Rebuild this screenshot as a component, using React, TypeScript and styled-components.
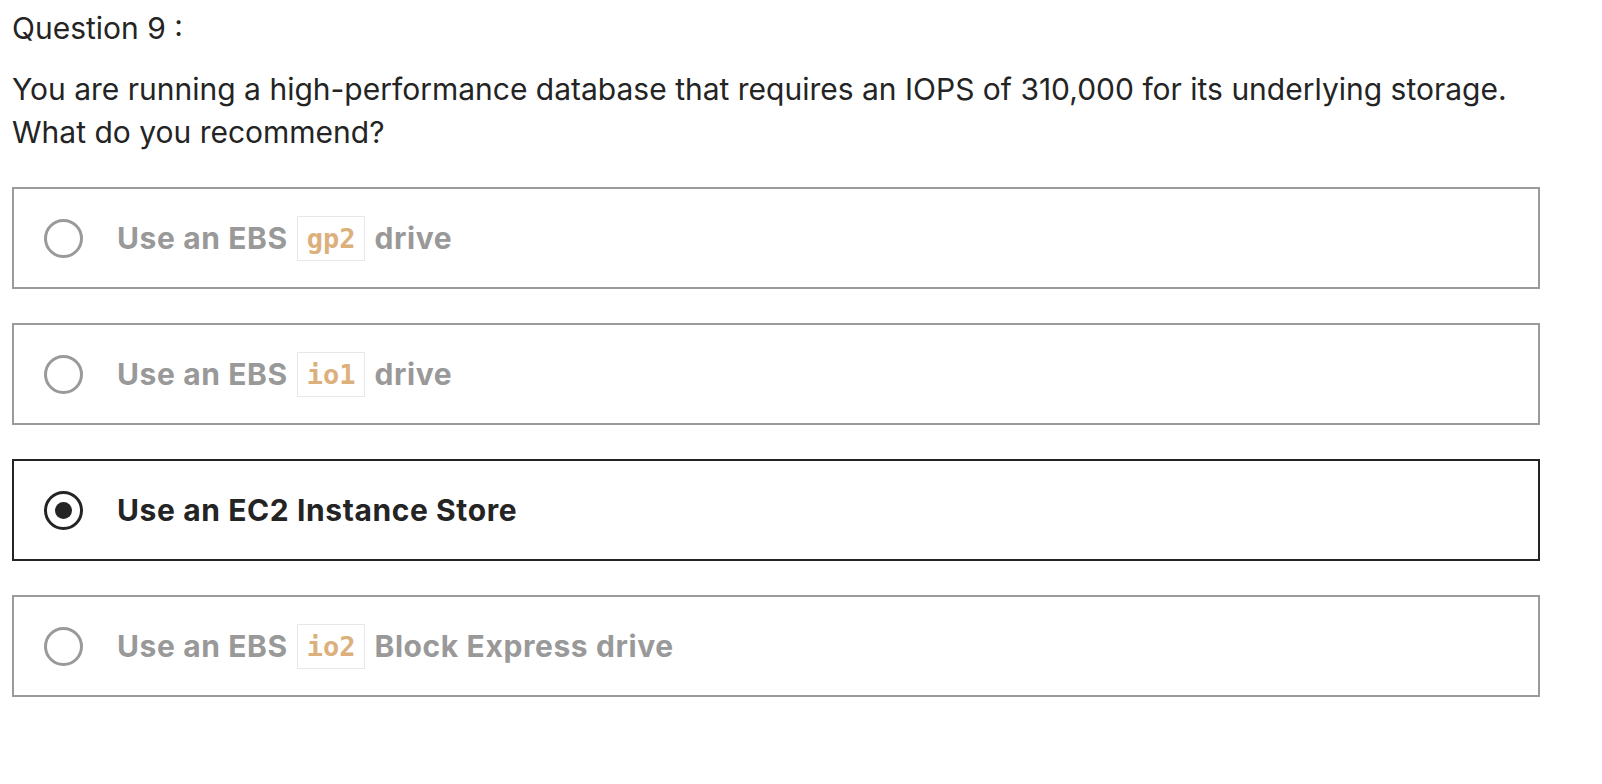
import React from "react";
import styled, { createGlobalStyle } from "styled-components";

const Global = createGlobalStyle`
  html, body { margin: 0; padding: 0; background: #ffffff; }
  body { font-family: Inter, "Liberation Sans", sans-serif; color: #242424; }
`;

const Page = styled.main`
  width: 1528px;
  padding: 0 0 0 12px;
`;

const Title = styled.div`
  font-size: 30px;
  line-height: 40px;
  padding-top: 8px;
  font-weight: 400;
  color: #242424;
`;

const Prompt = styled.p`
  margin: 20px 0 0 0;
  font-size: 30px;
  line-height: 43px;
  font-weight: 400;
  color: #242424;
`;

const Options = styled.div`
  display: flex;
  flex-direction: column;
  gap: 34px;
  margin-top: 33px;
`;

const Option = styled.label<{ $selected?: boolean }>`
  box-sizing: border-box;
  height: 102px;
  display: flex;
  align-items: center;
  gap: 34px;
  padding-left: 30px;
  border: 2px solid ${(p) => (p.$selected ? "#242424" : "#9a9a9a")};
  background: #ffffff;
`;

const Radio = styled.span<{ $selected?: boolean }>`
  box-sizing: border-box;
  width: 39px;
  height: 39px;
  border-radius: 50%;
  border: 3px solid ${(p) => (p.$selected ? "#242424" : "#9a9a9a")};
  display: flex;
  align-items: center;
  justify-content: center;
  flex-shrink: 0;
`;

const Dot = styled.span`
  width: 17px;
  height: 17px;
  border-radius: 50%;
  background: #242424;
`;

const Label = styled.span<{ $selected?: boolean }>`
  font-size: 30px;
  letter-spacing: 0.6px;
  font-weight: 700;
  color: ${(p) => (p.$selected ? "#242424" : "#999999")};
  display: flex;
  align-items: center;
  gap: 9px;
  white-space: pre;
`;

const Code = styled.code`
  box-sizing: border-box;
  height: 45px;
  display: inline-flex;
  align-items: center;
  padding: 0 9px;
  border: 1px solid #e4e8ec;
  background: #ffffff;
  color: #dcb07c;
  font-family: "DejaVu Sans Mono", "Liberation Mono", monospace;
  font-size: 27px;
  letter-spacing: 0;
  font-weight: 700;
`;

type Opt = { before: string; code?: string; after?: string; selected?: boolean };

const options: Opt[] = [
  { before: "Use an EBS", code: "gp2", after: "drive" },
  { before: "Use an EBS", code: "io1", after: "drive" },
  { before: "Use an EC2 Instance Store", selected: true },
  { before: "Use an EBS", code: "io2", after: "Block Express drive" },
];

export default function App() {
  return (
    <>
      <Global />
      <Page>
        <Title>Question 9 :</Title>
        <Prompt>
          You are running a high-performance database that requires an IOPS of 310,000 for its underlying storage.
          <br />
          What do you recommend?
        </Prompt>
        <Options>
          {options.map((o, i) => (
            <Option key={i} $selected={o.selected}>
              <Radio $selected={o.selected}>{o.selected && <Dot />}</Radio>
              <Label $selected={o.selected}>
                <span>{o.before}</span>
                {o.code && <Code>{o.code}</Code>}
                {o.after && <span>{o.after}</span>}
              </Label>
            </Option>
          ))}
        </Options>
      </Page>
    </>
  );
}
